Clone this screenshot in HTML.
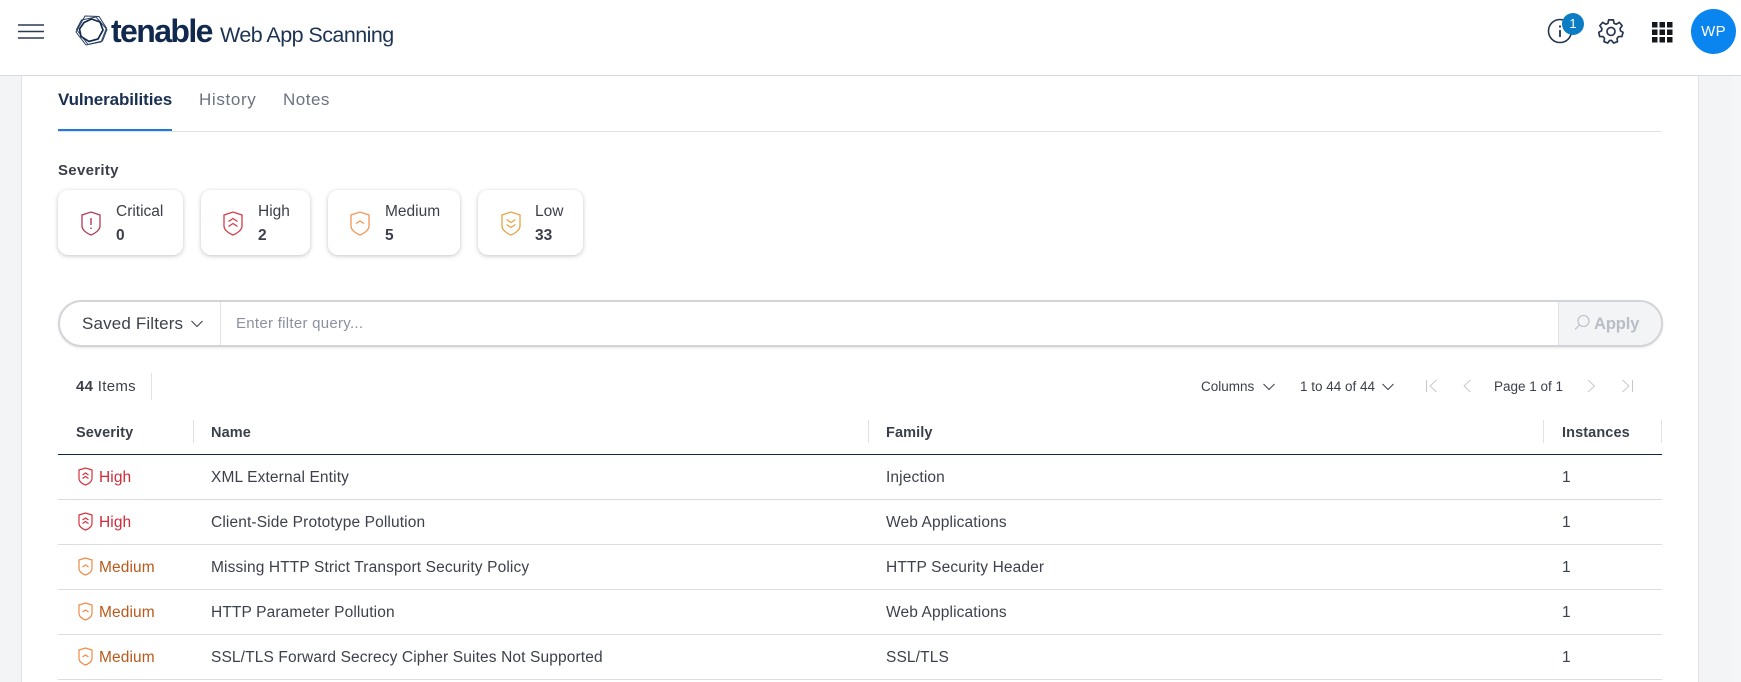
<!DOCTYPE html>
<html lang="en">
<head>
<meta charset="utf-8">
<title>Tenable Web App Scanning</title>
<style>
html,body{margin:0;padding:0;width:1741px;height:682px;overflow:hidden;background:#fff}
body{position:relative;font-family:"Liberation Sans",sans-serif;color:#3b3f4a}
.a{position:absolute;white-space:nowrap}
.t{position:absolute;white-space:nowrap;line-height:20px;height:20px}
.card{position:absolute;top:190px;height:65px;background:#fff;border-radius:10px;box-shadow:0 1px 4px rgba(30,40,60,.28)}
.r{font-size:15.5px;letter-spacing:.13px;color:#3d414c}
.h{font-size:14.5px;font-weight:bold;letter-spacing:.1px;color:#3b3f4a}
.line{position:absolute;left:58px;width:1604px;height:1px;background:#dcdde0}
.div{position:absolute;width:1px;background:#e1e2e5}
.sev{font-size:15.5px;letter-spacing:.1px}
.cl{font-size:15.5px}
.cv{font-size:15.5px;font-weight:bold}
svg{position:absolute;overflow:visible}
</style>
</head>
<body>
<!-- gutters -->
<div class="a" style="left:0;top:76px;width:21px;height:606px;background:#f3f4f6;border-right:1px solid #dfe1e5"></div>
<div class="a" style="left:1698px;top:76px;width:43px;height:606px;background:#f3f4f6;border-left:1px solid #dfe1e5;box-sizing:border-box"></div>
<div class="a" style="left:1733px;top:76px;width:8px;height:606px;background:#f5f6f7"></div>

<!-- header -->
<div class="a" style="left:0;top:0;width:1741px;height:75px;background:#fff;border-bottom:1px solid #d8d9dc"></div>
<svg style="left:18px;top:24px" width="27" height="16" fill="none" stroke="#2c3a55" stroke-width="1.5"><path d="M0 1H26M0 7.5H26M0 14H26"/></svg>
<svg style="left:75px;top:15px" width="33" height="31" viewBox="0 0 33 31" fill="none" stroke="#2a3d5e" stroke-width="1">
<path d="M10 1L24 1.500 31.500 13 26 27 11 30 1 17Z"/>
<path d="M6.500 5L21 2 32 14.500 27.500 26 13 29.500 1.500 14.500Z"/>
<path d="M9 7.500L16.500 4 25 7 28 15 23 24 14 26.500 6 21.500 4.500 14Z" stroke="#10294d" stroke-width="1.700"/>
</svg>
<div class="t" style="left:111px;top:13px;height:36px;line-height:36px;font-size:32px;font-weight:bold;letter-spacing:-1.6px;color:#10294d">tenable</div>
<div class="t" style="left:220px;top:20px;height:30px;line-height:30px;font-size:21.5px;letter-spacing:-.55px;color:#1c3353">Web App Scanning</div>

<svg style="left:1547px;top:18px" width="26" height="26" fill="none"><circle cx="13" cy="13" r="11.500" stroke="#25344f" stroke-width="1.600"/><path d="M13 12V19" stroke="#25344f" stroke-width="1.800"/><circle cx="13" cy="8.500" r="1.100" fill="#25344f"/></svg>
<div class="a" style="left:1562px;top:13px;width:22px;height:22px;border-radius:50%;background:#0c7cc4;color:#fff;font-size:13px;line-height:21px;text-align:center">1</div>
<svg style="left:1598px;top:18px" width="26" height="26" viewBox="0 0 28 28" fill="none" stroke="#25344f" stroke-width="1.800" stroke-linejoin="round"><path d="M11.500 2H16.500L17.300 5.700 19.700 6.700 23 4.700 26 8.300 23.800 11.300 24.200 13.800 27 15.500 25.700 20 22.200 20 20.500 22 21 25.500 16.700 27 14.700 24.200H12.500L10.500 27 6.500 25.500 7 22 5.300 20 1.800 20 .8 15.500 3.800 13.800 4.200 11.300 2 8.300 5 4.700 8.300 6.700 10.700 5.700Z"/><circle cx="14" cy="14.500" r="4.300"/></svg>
<svg style="left:1652px;top:22px" width="21" height="21" fill="#14171c"><path d="M0 0h5.500v5.500H0zM7.500 0h5.500v5.500H7.500zM15 0h5.500v5.500H15zM0 7.500h5.500v5.500H0zM7.500 7.500h5.500v5.500H7.500zM15 7.500h5.500v5.500H15zM0 15h5.500v5.500H0zM7.500 15h5.500v5.500H7.500zM15 15h5.500v5.500H15z"/></svg>
<div class="a" style="left:1691px;top:9px;width:45px;height:45px;border-radius:50%;background:#0a84ee;color:#fff;font-size:15px;line-height:45px;text-align:center;letter-spacing:.3px">WP</div>

<!-- tabs -->
<div class="t" style="left:58px;top:90px;font-size:17px;font-weight:bold;letter-spacing:-.1px;color:#1a2f52">Vulnerabilities</div>
<div class="t" style="left:199px;top:90px;font-size:17px;letter-spacing:.65px;color:#6b7280">History</div>
<div class="t" style="left:283px;top:90px;font-size:17px;letter-spacing:.5px;color:#6b7280">Notes</div>
<div class="line" style="top:131px;height:1px;background:#e1e2e5"></div>
<div class="a" style="left:58px;top:129px;width:114px;height:2px;background:#1f7ae0"></div>

<!-- severity -->
<div class="t" style="left:58px;top:161px;font-size:15px;font-weight:bold;letter-spacing:.3px;color:#3b3f4a">Severity</div>

<div class="card" style="left:58px;width:125px"></div>
<div class="card" style="left:201px;width:109px"></div>
<div class="card" style="left:328px;width:132px"></div>
<div class="card" style="left:478px;width:105px"></div>

<svg style="left:81px;top:211px" width="20" height="25" viewBox="0 0 20 25" fill="none" stroke="#b03a55" stroke-width="1.300"><path d="M1 4L10 1 19 4V15C19 19 14 22.500 10 24 6 22.500 1 19 1 15Z"/><path d="M10 7V14M10 16.500V18" stroke-width="1.400"/></svg>
<svg style="left:223px;top:211px" width="20" height="25" viewBox="0 0 20 25" fill="none" stroke="#d83a4a" stroke-width="1.300"><path d="M1 4L10 1 19 4V15C19 19 14 22.500 10 24 6 22.500 1 19 1 15Z"/><path d="M5.500 10.500L10 7.500 14.500 10.500M5.500 15.500L10 12.500 14.500 15.500"/></svg>
<svg style="left:350px;top:211px" width="20" height="25" viewBox="0 0 20 25" fill="none" stroke="#f59556" stroke-width="1.300"><path d="M1 4L10 1 19 4V15C19 19 14 22.500 10 24 6 22.500 1 19 1 15Z"/><path d="M6 12.500L10 10 14 12.500"/></svg>
<svg style="left:501px;top:211px" width="20" height="25" viewBox="0 0 20 25" fill="none" stroke="#e3a544" stroke-width="1.300"><path d="M1 4L10 1 19 4V15C19 19 14 22.500 10 24 6 22.500 1 19 1 15Z"/><path d="M5.500 8.500L10 11.500 14.500 8.500M5.500 13.500L10 16.500 14.500 13.500"/></svg>

<div class="t cl" style="left:116px;top:202px">Critical</div>
<div class="t cv" style="left:116px;top:226px">0</div>
<div class="t cl" style="left:258px;top:202px">High</div>
<div class="t cv" style="left:258px;top:226px">2</div>
<div class="t cl" style="left:385px;top:202px">Medium</div>
<div class="t cv" style="left:385px;top:226px">5</div>
<div class="t cl" style="left:535px;top:202px">Low</div>
<div class="t cv" style="left:535px;top:226px">33</div>

<!-- filter bar -->
<div class="a" style="left:58px;top:300px;width:1605px;height:47px;box-sizing:border-box;background:#fff;border:2px solid #d3d4d7;border-radius:24px;box-shadow:0 1px 2px rgba(0,0,0,.1);overflow:hidden">
  <div class="a" style="left:160px;top:0;width:1px;height:43px;background:#e2e3e6"></div>
  <div class="a" style="left:1498px;top:0;width:105px;height:43px;background:#f3f4f6;border-left:1px solid #dfe0e4"></div>
</div>
<div class="t" style="left:82px;top:314px;font-size:17px;letter-spacing:.15px;color:#3d414c">Saved Filters</div>
<svg style="left:191px;top:320px" width="12" height="8" fill="none" stroke="#3d414c" stroke-width="1.100"><path d="M.5 1L6 6.500 11.500 1"/></svg>
<div class="t" style="left:236px;top:314px;font-size:15px;letter-spacing:.28px;color:#8b91a0">Enter filter query...</div>
<svg style="left:1574px;top:314px" width="16" height="18" fill="none" stroke="#b9bdc5" stroke-width="1.100"><circle cx="9.500" cy="7" r="5.500"/><path d="M5.500 11L1 15.500"/></svg>
<div class="t" style="left:1594px;top:314px;font-size:16.500px;font-weight:bold;letter-spacing:-.1px;color:#b9bdc5">Apply</div>

<!-- toolbar -->
<div class="t" style="left:76px;top:377px;font-size:15px;letter-spacing:.3px;color:#3d414c"><b>44</b> Items</div>
<div class="div" style="left:151px;top:373px;height:27px"></div>
<div class="t" style="left:1201px;top:377px;font-size:13.500px;color:#3d414c">Columns</div>
<svg style="left:1263px;top:383px" width="12" height="8" fill="none" stroke="#3d414c" stroke-width="1"><path d="M.5 1L6 6.500 11.500 1"/></svg>
<div class="t" style="left:1300px;top:377px;font-size:13.500px;color:#3d414c">1 to 44 of 44</div>
<svg style="left:1382px;top:383px" width="12" height="8" fill="none" stroke="#3d414c" stroke-width="1"><path d="M.5 1L6 6.500 11.500 1"/></svg>
<svg style="left:1426px;top:379px" width="12" height="14" fill="none" stroke="#c5c8ce" stroke-width="1"><path d="M.5 1V13M10.500 1L4 7 10.500 13"/></svg>
<svg style="left:1463px;top:379px" width="9" height="14" fill="none" stroke="#c5c8ce" stroke-width="1"><path d="M7.500 1L1 7 7.500 13"/></svg>
<div class="t" style="left:1494px;top:377px;font-size:13.500px;color:#3d414c">Page 1 of 1</div>
<svg style="left:1587px;top:379px" width="9" height="14" fill="none" stroke="#c5c8ce" stroke-width="1"><path d="M1 1L7.500 7 1 13"/></svg>
<svg style="left:1622px;top:379px" width="12" height="14" fill="none" stroke="#c5c8ce" stroke-width="1"><path d="M.5 1L7 7 .5 13M10.500 1V13"/></svg>

<!-- table head -->
<div class="t h" style="left:76px;top:423px">Severity</div>
<div class="t h" style="left:211px;top:423px">Name</div>
<div class="t h" style="left:886px;top:423px">Family</div>
<div class="t h" style="left:1562px;top:423px">Instances</div>
<div class="div" style="left:193px;top:420px;height:23px"></div>
<div class="div" style="left:868px;top:420px;height:23px"></div>
<div class="div" style="left:1543px;top:420px;height:23px"></div>
<div class="div" style="left:1661px;top:420px;height:23px"></div>
<div class="line" style="top:454px;height:1px;background:#10294d"></div>

<!-- rows -->
<svg style="left:78px;top:467px" width="15" height="19" viewBox="0 0 15 19" fill="none" stroke="#d6333f" stroke-width="1.200"><path d="M1 3L7.500 1 14 3V11.500C14 14.500 10.500 17 7.500 18 4.500 17 1 14.500 1 11.500Z"/><path d="M4.500 8L7.500 6 10.500 8M4.500 11.500L7.500 9.500 10.500 11.500"/></svg>
<div class="t sev" style="left:99px;top:468px;color:#cf2a3a">High</div>
<div class="t r" style="left:211px;top:468px">XML External Entity</div>
<div class="t r" style="left:886px;top:468px">Injection</div>
<div class="t r" style="left:1562px;top:468px">1</div>
<div class="line" style="top:499px"></div>

<svg style="left:78px;top:512px" width="15" height="19" viewBox="0 0 15 19" fill="none" stroke="#d6333f" stroke-width="1.200"><path d="M1 3L7.500 1 14 3V11.500C14 14.500 10.500 17 7.500 18 4.500 17 1 14.500 1 11.500Z"/><path d="M4.500 8L7.500 6 10.500 8M4.500 11.500L7.500 9.500 10.500 11.500"/></svg>
<div class="t sev" style="left:99px;top:513px;color:#cf2a3a">High</div>
<div class="t r" style="left:211px;top:513px">Client-Side Prototype Pollution</div>
<div class="t r" style="left:886px;top:513px">Web Applications</div>
<div class="t r" style="left:1562px;top:513px">1</div>
<div class="line" style="top:544px"></div>

<svg style="left:78px;top:557px" width="15" height="19" viewBox="0 0 15 19" fill="none" stroke="#f08a45" stroke-width="1.200"><path d="M1 3L7.500 1 14 3V11.500C14 14.500 10.500 17 7.500 18 4.500 17 1 14.500 1 11.500Z"/><path d="M4.500 10L7.500 8 10.500 10"/></svg>
<div class="t sev" style="left:99px;top:558px;color:#b8591a">Medium</div>
<div class="t r" style="left:211px;top:558px">Missing HTTP Strict Transport Security Policy</div>
<div class="t r" style="left:886px;top:558px">HTTP Security Header</div>
<div class="t r" style="left:1562px;top:558px">1</div>
<div class="line" style="top:589px"></div>

<svg style="left:78px;top:602px" width="15" height="19" viewBox="0 0 15 19" fill="none" stroke="#f08a45" stroke-width="1.200"><path d="M1 3L7.500 1 14 3V11.500C14 14.500 10.500 17 7.500 18 4.500 17 1 14.500 1 11.500Z"/><path d="M4.500 10L7.500 8 10.500 10"/></svg>
<div class="t sev" style="left:99px;top:603px;color:#b8591a">Medium</div>
<div class="t r" style="left:211px;top:603px">HTTP Parameter Pollution</div>
<div class="t r" style="left:886px;top:603px">Web Applications</div>
<div class="t r" style="left:1562px;top:603px">1</div>
<div class="line" style="top:634px"></div>

<svg style="left:78px;top:647px" width="15" height="19" viewBox="0 0 15 19" fill="none" stroke="#f08a45" stroke-width="1.200"><path d="M1 3L7.500 1 14 3V11.500C14 14.500 10.500 17 7.500 18 4.500 17 1 14.500 1 11.500Z"/><path d="M4.500 10L7.500 8 10.500 10"/></svg>
<div class="t sev" style="left:99px;top:648px;color:#b8591a">Medium</div>
<div class="t r" style="left:211px;top:648px">SSL/TLS Forward Secrecy Cipher Suites Not Supported</div>
<div class="t r" style="left:886px;top:648px">SSL/TLS</div>
<div class="t r" style="left:1562px;top:648px">1</div>
<div class="line" style="top:679px"></div>
</body>
</html>
